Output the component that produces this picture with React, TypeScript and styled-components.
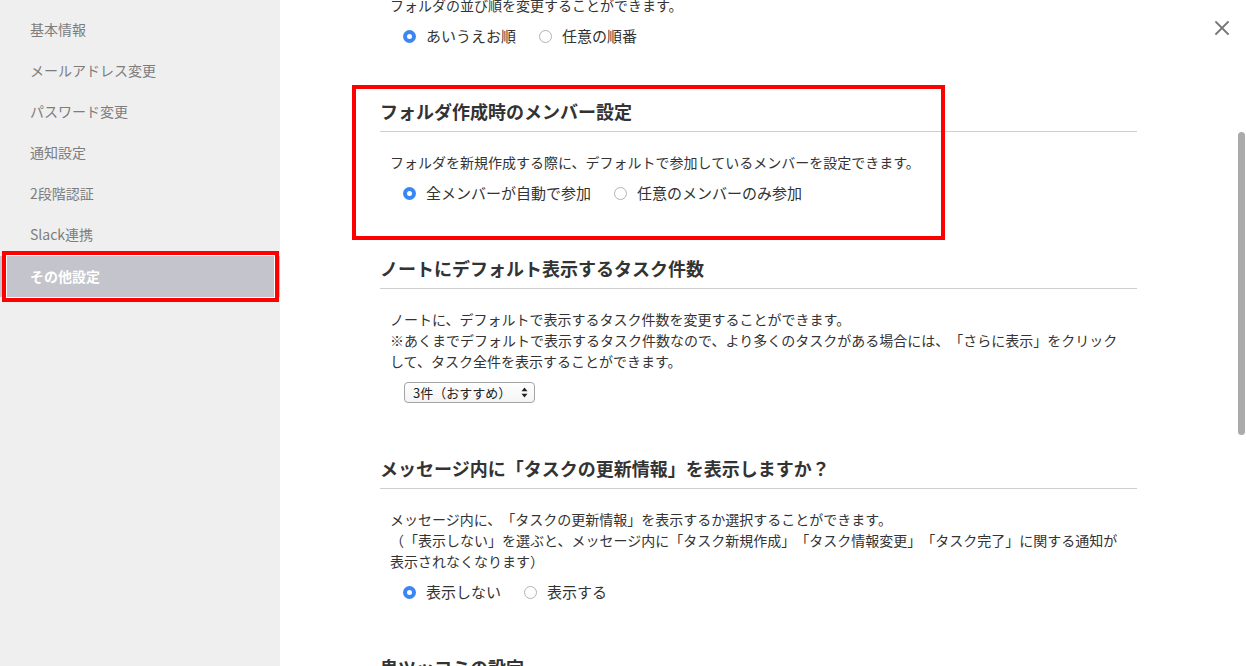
import React from "react";
import styled, { createGlobalStyle, css } from "styled-components";

const GlobalStyle = createGlobalStyle`
  html, body { margin: 0; padding: 0; background: #fff; }
  body {
    font-family: "Noto Sans CJK JP", "Noto Sans", sans-serif;
    color: #333;
    text-spacing-trim: space-all;
    -webkit-font-smoothing: antialiased;
  }
  * { box-sizing: border-box; }
`;

const Page = styled.div`
  display: flex;
  width: 100%;
  height: 100vh;
  overflow: hidden;
`;

const Sidebar = styled.nav`
  width: 280px;
  flex: 0 0 280px;
  background: #efefef;
  padding-top: 9px;
  display: flex;
  flex-direction: column;
`;

const NavItem = styled.div<{ $active?: boolean }>`
  position: relative;
  height: 41px;
  line-height: 41px;
  padding: 0 30px;
  font-size: 14px;
  color: #7d7d7d;
  white-space: nowrap;
  ${(p) =>
    p.$active &&
    css`
      margin-top: 1px;
      background: #c4c5cc;
      color: #fff;
      font-weight: 700;
    `}
`;

const NavHighlight = styled.div`
  position: absolute;
  top: -5px;
  bottom: -5px;
  left: 2px;
  right: 1px;
  border: 4px solid #ff0000;
  box-shadow: inset 0 0 0 1px #fff;
  pointer-events: none;
`;

const Main = styled.main`
  position: relative;
  flex: 1;
  height: 100%;
  overflow: hidden;
  background: #fff;
`;

const Column = styled.div`
  width: 757px;
  margin-left: 100px;
  margin-top: -56px;
  display: flex;
  flex-direction: column;
  gap: 55px;
`;

const Section = styled.section`
  position: relative;
`;

const SectionHighlight = styled.div`
  position: absolute;
  left: -28px;
  top: -16px;
  width: 593px;
  height: 155px;
  border: 4px solid #ff0000;
  pointer-events: none;
`;

const Heading = styled.h2`
  margin: 0;
  font-size: 18px;
  font-weight: 700;
  line-height: 20px;
  padding-bottom: 10px;
  border-bottom: 1px solid #cfcfcf;
  color: #333;
  white-space: nowrap;
`;

const Body = styled.div`
  padding: 20px 10px 0 10px;
`;

const Desc = styled.p`
  margin: 0;
  font-size: 14px;
  line-height: 21px;
  color: #333;
`;

const RadioGroup = styled.div`
  display: flex;
  align-items: center;
  gap: 23px;
  height: 20px;
  margin-top: 10px;
  padding-left: 13px;
`;

const RadioLabel = styled.label`
  display: flex;
  align-items: center;
  gap: 10px;
  font-size: 15px;
  line-height: 20px;
  color: #333;
  white-space: nowrap;
`;

const RadioCircle = styled.span<{ $checked?: boolean }>`
  position: relative;
  width: 13px;
  height: 13px;
  border-radius: 50%;
  flex: 0 0 13px;
  ${(p) =>
    p.$checked
      ? css`
          background: #3a86f4;
          &::after {
            content: "";
            position: absolute;
            left: 4px;
            top: 4px;
            width: 5px;
            height: 5px;
            border-radius: 50%;
            background: #fff;
          }
        `
      : css`
          background: #fff;
          border: 1px solid #b3b3b3;
        `}
`;

const SelectBox = styled.div`
  display: inline-flex;
  align-items: center;
  justify-content: space-between;
  width: 131px;
  height: 21px;
  margin-top: 10px;
  margin-left: 14px;
  padding: 0 6px 0 8px;
  border: 1px solid #a3a3a3;
  border-radius: 4px;
  background: linear-gradient(#ffffff, #f4f4f4);
  font-size: 13px;
  color: #222;
  white-space: nowrap;
`;

const SelectRow = styled.div`
  display: block;
`;

const CloseButton = styled.button`
  position: absolute;
  top: 21px;
  right: 17px;
  width: 14px;
  height: 14px;
  padding: 0;
  border: none;
  background: none;
  display: flex;
`;

const ScrollThumb = styled.div`
  position: absolute;
  right: 1px;
  top: 132px;
  width: 7px;
  height: 303px;
  border-radius: 4px;
  background: #ababab;
`;

type Opt = { label: string; checked?: boolean };

const Radios: React.FC<{ options: Opt[] }> = ({ options }) => (
  <RadioGroup>
    {options.map((o) => (
      <RadioLabel key={o.label}>
        <RadioCircle $checked={o.checked} />
        {o.label}
      </RadioLabel>
    ))}
  </RadioGroup>
);

const navItems = [
  "基本情報",
  "メールアドレス変更",
  "パスワード変更",
  "通知設定",
  "2段階認証",
  "Slack連携",
  "その他設定",
];

export default function App() {
  return (
    <>
      <GlobalStyle />
      <Page>
        <Sidebar>
          {navItems.map((n, i) => (
            <NavItem key={n} $active={i === navItems.length - 1}>
              {n}
              {i === navItems.length - 1 && <NavHighlight />}
            </NavItem>
          ))}
        </Sidebar>
        <Main>
          <Column>
            <Section>
              <Heading>フォルダの並び順</Heading>
              <Body>
                <Desc>フォルダの並び順を変更することができます。</Desc>
                <Radios
                  options={[
                    { label: "あいうえお順", checked: true },
                    { label: "任意の順番" },
                  ]}
                />
              </Body>
            </Section>
            <Section>
              <SectionHighlight />
              <Heading>フォルダ作成時のメンバー設定</Heading>
              <Body>
                <Desc>
                  フォルダを新規作成する際に、デフォルトで参加しているメンバーを設定できます。
                </Desc>
                <Radios
                  options={[
                    { label: "全メンバーが自動で参加", checked: true },
                    { label: "任意のメンバーのみ参加" },
                  ]}
                />
              </Body>
            </Section>
            <Section>
              <Heading>ノートにデフォルト表示するタスク件数</Heading>
              <Body>
                <Desc>
                  ノートに、デフォルトで表示するタスク件数を変更することができます。
                  <br />
                  ※あくまでデフォルトで表示するタスク件数なので、より多くのタスクがある場合には、「さらに表示」をクリックして、タスク全件を表示することができます。
                </Desc>
                <SelectRow>
                  <SelectBox>
                    <span>3件（おすすめ）</span>
                    <svg width="7" height="11" viewBox="0 0 7 11">
                      <path d="M3.5 0.5 L6.5 4.3 L0.5 4.3 Z" fill="#222" />
                      <path d="M3.5 10.5 L6.5 6.7 L0.5 6.7 Z" fill="#222" />
                    </svg>
                  </SelectBox>
                </SelectRow>
              </Body>
            </Section>
            <Section>
              <Heading>メッセージ内に「タスクの更新情報」を表示しますか？</Heading>
              <Body>
                <Desc>
                  メッセージ内に、「タスクの更新情報」を表示するか選択することができます。
                  <br />
                  （「表示しない」を選ぶと、メッセージ内に「タスク新規作成」「タスク情報変更」「タスク完了」に関する通知が表示されなくなります）
                </Desc>
                <Radios
                  options={[
                    { label: "表示しない", checked: true },
                    { label: "表示する" },
                  ]}
                />
              </Body>
            </Section>
            <Section>
              <Heading>鬼ツッコミの設定</Heading>
              <Body>
                <Desc>鬼ツッコミの設定を変更することができます。</Desc>
              </Body>
            </Section>
          </Column>
          <CloseButton aria-label="閉じる">
            <svg width="14" height="14" viewBox="0 0 14 14">
              <path
                d="M1 1 L13 13 M13 1 L1 13"
                stroke="#777"
                strokeWidth="1.8"
                strokeLinecap="round"
              />
            </svg>
          </CloseButton>
          <ScrollThumb />
        </Main>
      </Page>
    </>
  );
}
